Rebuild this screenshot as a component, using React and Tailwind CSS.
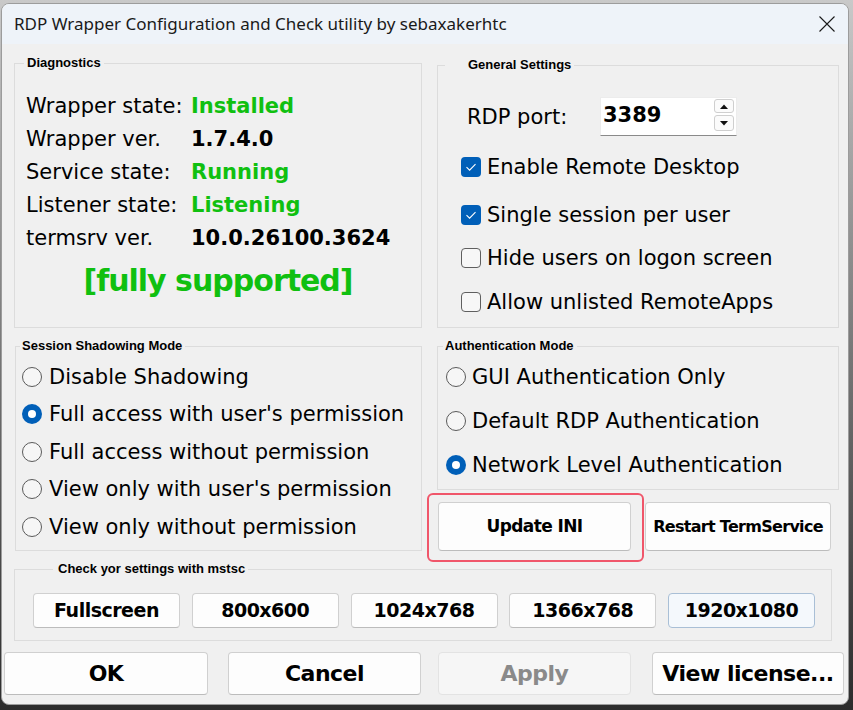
import React from "react";

function GroupBox({ title, className = "", titleClass = "", children }) {
  return (
    <div className={`relative border border-[#dcdcdc] ${className}`}>
      <span
        className={`absolute -top-[9px] bg-[#f0f0f0] text-[13px] leading-[16px] font-bold text-black font-['Liberation_Sans',Arial,sans-serif] ${titleClass}`}
      >
        {title}
      </span>
      {children}
    </div>
  );
}

function Checkbox({ checked }) {
  if (checked) {
    return (
      <span className="w-[20px] h-[20px] rounded-[4px] bg-[#005fb8] flex items-center justify-center shrink-0">
        <svg width="20" height="20" viewBox="0 0 20 20">
          <path d="M5.5 10.2 L8.6 13.2 L14.5 7.2" fill="none" stroke="#ffffff" strokeWidth="1.1" />
        </svg>
      </span>
    );
  }
  return <span className="w-[20px] h-[20px] rounded-[4px] border border-[#5f5f5f] bg-[#f7f7f7] shrink-0" />;
}

function Radio({ checked }) {
  if (checked) {
    return (
      <span className="w-[20px] h-[20px] rounded-full bg-[#005fb8] flex items-center justify-center shrink-0">
        <span className="w-[8px] h-[8px] rounded-full bg-white" />
      </span>
    );
  }
  return <span className="w-[20px] h-[20px] rounded-full border border-[#5a5a5a] bg-[#f6f6f6] shrink-0" />;
}

function Btn({ children, className = "" }) {
  return (
    <div
      className={`flex items-center justify-center rounded-[4px] border border-[#d0d0d0] border-b-[#bcbcbc] bg-[#fdfdfd] font-bold text-black ${className}`}
    >
      {children}
    </div>
  );
}

export default function App() {
  const green = "text-[#10c010]";
  const rowsLeft = [
    { l: "Wrapper state:", v: "Installed", g: true },
    { l: "Wrapper ver.", v: "1.7.4.0" },
    { l: "Service state:", v: "Running", g: true },
    { l: "Listener state:", v: "Listening", g: true },
    { l: "termsrv ver.", v: "10.0.26100.3624" },
  ];
  const shadow = [
    ["Disable Shadowing", false],
    ["Full access with user's permission", true],
    ["Full access without permission", false],
    ["View only with user's permission", false],
    ["View only without permission", false],
  ];
  const auth = [
    ["GUI Authentication Only", false],
    ["Default RDP Authentication", false],
    ["Network Level Authentication", true],
  ];
  const checks = [
    ["Enable Remote Desktop", true, "mt-[21px]"],
    ["Single session per user", true, "mt-[28px]"],
    ["Hide users on logon screen", false, "mt-[23px]"],
    ["Allow unlisted RemoteApps", false, "mt-[24px]"],
  ];

  return (
    <div className="w-[853px] h-[710px] overflow-hidden bg-gradient-to-b from-[#c9c9c9] via-[#777777] to-[#2c2c2c] pt-[3px] pl-[1px] font-['DejaVu_Sans',sans-serif] text-black">
      <div className="w-[848px] h-[702px] rounded-[8px] border border-[#9c9c9c] bg-[#f0f0f0] overflow-hidden flex flex-col">
        {/* Title bar */}
        <div className="h-[40px] shrink-0 bg-[#eef3f9] flex items-center pl-[12px] pr-[13px]">
          <span className="text-[17px] font-['Noto_Sans',sans-serif] text-[#1a1a1a]">
            RDP Wrapper Configuration and Check utility by sebaxakerhtc
          </span>
          <svg className="ml-auto" width="16" height="16" viewBox="0 0 16 16">
            <path d="M0.5 0.5 L15.5 15.5 M15.5 0.5 L0.5 15.5" stroke="#1a1a1a" strokeWidth="1.1" fill="none" />
          </svg>
        </div>

        {/* Body */}
        <div className="flex flex-col pt-[19px]">
          {/* Row 1 */}
          <div className="flex items-start ml-[12px]">
            <GroupBox title="Diagnostics" className="w-[408px] h-[265px]" titleClass="left-[9px] px-[3px]">
              <div className="pt-[26px] pl-[11px] grid grid-cols-[165px_1fr] text-[21px] leading-[33px]">
                {rowsLeft.map((r) => (
                  <React.Fragment key={r.l}>
                    <span className="whitespace-nowrap">{r.l}</span>
                    <span className={`font-bold whitespace-nowrap ${r.g ? green : "text-black"}`}>{r.v}</span>
                  </React.Fragment>
                ))}
              </div>
              <div className={`mt-[8px] text-center text-[30px] leading-[36px] font-bold tracking-[-1px] ${green}`}>
                [fully supported]
              </div>
            </GroupBox>

            <GroupBox title="General Settings" className="ml-[15px] mt-[2px] w-[402px] h-[263px]" titleClass="left-[7px] pl-[23px] pr-[3px]">
              <div className="flex flex-col">
                <div className="pt-[31px] pl-[29px] flex items-center">
                  <span className="w-[133px] text-[21px] leading-[26px]">RDP port:</span>
                  <div className="w-[137px] h-[39px] bg-white border border-[#ececec] border-b-[#8a8a8a] flex items-center pl-[2px] pr-[2px]">
                    <span className="text-[21px] font-bold leading-[26px] -mt-[4px]">3389</span>
                    <div className="ml-auto flex flex-col gap-[2px] -mt-[3px]">
                      <div className="w-[20px] h-[14px] rounded-[3px] border border-[#cfcfcf] bg-[#fbfbfb] flex items-center justify-center">
                        <svg width="8" height="5" viewBox="0 0 8 5"><path d="M0 5 L4 0.5 L8 5 Z" fill="#111" /></svg>
                      </div>
                      <div className="w-[20px] h-[16px] rounded-[3px] border border-[#cfcfcf] bg-[#fbfbfb] flex items-center justify-center">
                        <svg width="8" height="5" viewBox="0 0 8 5"><path d="M0 0 L8 0 L4 4.5 Z" fill="#111" /></svg>
                      </div>
                    </div>
                  </div>
                </div>
                {checks.map(([t, c, m]) => (
                  <div key={t} className={`pl-[23px] h-[20px] flex items-center gap-[6px] ${m}`}>
                    <Checkbox checked={c} />
                    <span className="text-[21px] leading-[26px] whitespace-nowrap">{t}</span>
                  </div>
                ))}
              </div>
            </GroupBox>
          </div>

          {/* Row 2 */}
          <div className="flex items-start mt-[18px]">
            <GroupBox title="Session Shadowing Mode" className="ml-[13px] w-[407px] h-[205px]" titleClass="left-[4px] pl-[2px] pr-[3px]">
              <div className="pt-[11px] pl-[6px] flex flex-col">
                {shadow.map(([t, c]) => (
                  <div key={t} className="h-[37.5px] flex items-center gap-[7px]">
                    <Radio checked={c} />
                    <span className="text-[21px] leading-[26px] whitespace-nowrap">{t}</span>
                  </div>
                ))}
              </div>
            </GroupBox>

            <div className="ml-[15px] w-[402px] flex flex-col">
              <GroupBox title="Authentication Mode" className="w-[402px] h-[144px]" titleClass="left-[5px] pl-[2px] pr-[3px]">
                <div className="pt-[8px] pl-[8px] flex flex-col">
                  {auth.map(([t, c]) => (
                    <div key={t} className="h-[44px] flex items-center gap-[6px]">
                      <Radio checked={c} />
                      <span className="text-[21px] leading-[26px] whitespace-nowrap">{t}</span>
                    </div>
                  ))}
                </div>
              </GroupBox>
              <div className="mt-[12px] flex">
                <div className="relative ml-[1px]">
                  <Btn className="w-[193px] h-[49px] text-[17px] tracking-[-0.6px]">Update INI</Btn>
                  <div className="absolute -left-[11px] -top-[9px] w-[217px] h-[69px] rounded-[6px] border-2 border-[#f0566a] pointer-events-none" />
                </div>
                <Btn className="ml-[14px] w-[186px] h-[49px] text-[16px] tracking-[-0.7px]">Restart TermService</Btn>
              </div>
            </div>
          </div>

          {/* Row 3 */}
          <GroupBox title="Check yor settings with mstsc" className="mt-[18px] ml-[12px] w-[818px] h-[72px]" titleClass="left-[38px] pl-[5px] pr-[3px]">
            <div className="pt-[23px] pl-[18px] flex gap-[11.75px]">
              {["Fullscreen", "800x600", "1024x768", "1366x768"].map((t) => (
                <Btn key={t} className="w-[147px] h-[35px] text-[19px] tracking-[-0.5px]">{t}</Btn>
              ))}
              <div className="w-[147px] h-[35px] rounded-[4px] border border-[#a9bfd6] bg-[#f4f8fc] flex items-center justify-center font-bold text-[19px] tracking-[-0.5px]">
                1920x1080
              </div>
            </div>
          </GroupBox>

          {/* Row 4 */}
          <div className="mt-[11px] flex">
            <Btn className="ml-[2px] w-[204px] h-[43px] text-[22px] tracking-[-0.5px]">OK</Btn>
            <Btn className="ml-[20px] w-[193px] h-[43px] text-[22px] tracking-[-0.5px]">Cancel</Btn>
            <div className="ml-[17px] w-[193px] h-[43px] rounded-[4px] border border-[#e3e3e3] bg-[#f6f6f6] flex items-center justify-center font-bold text-[22px] tracking-[-0.5px] text-[#8a8a8a]">
              Apply
            </div>
            <Btn className="ml-[21px] w-[192px] h-[43px] text-[22px] tracking-[-0.5px]">View license...</Btn>
          </div>
        </div>
      </div>
    </div>
  );
}
